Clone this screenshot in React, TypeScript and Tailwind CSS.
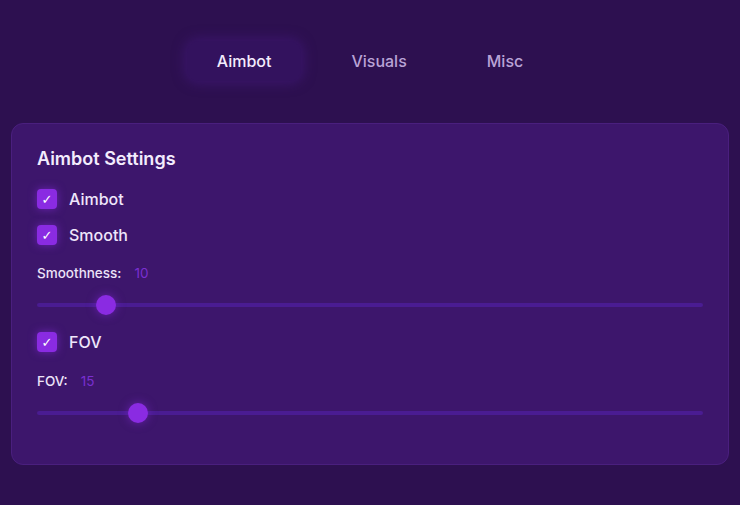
import React, { useState } from 'react';

const font = { fontFamily: 'Inter, "Noto Sans", sans-serif' };

type Tab = 'Aimbot' | 'Visuals' | 'Misc';

const Check: React.FC<{ label: string; checked: boolean; onToggle: () => void }> = ({ label, checked, onToggle }) => (
  <button onClick={onToggle} className="flex items-center gap-3 h-6 text-left">
    <span
      className={`w-5 h-5 rounded-[4px] flex items-center justify-center text-white text-[13px] leading-none font-['DejaVu_Sans',sans-serif] ${
        checked ? 'bg-[#8a2be2] shadow-[0_0_8px_rgba(138,43,226,0.6)]' : 'bg-[#2a0f4c] border border-[#5b2a9a]'
      }`}
    >
      {checked ? '✓' : ''}
    </span>
    <span className="text-[16px] text-[#efe6fb] font-medium">{label}</span>
  </button>
);

const Slider: React.FC<{ label: string; value: number; onChange: (v: number) => void }> = ({ label, value, onChange }) => {
  const pct = (value - 1) / 99;
  return (
    <div className="flex flex-col gap-3">
      <div className="flex items-center gap-[13px] h-5 text-[13.5px]">
        <span className="text-[#ece3f8] font-medium">{label}</span>
        <span className="text-[#7a2fd0]">{value}</span>
      </div>
      <div className="relative h-5 flex items-center">
        <div className="w-full h-[4px] rounded-full bg-[#4a1c92]" />
        <div
          className="absolute top-0 w-5 h-5 rounded-full bg-[#8a2be2] shadow-[0_0_10px_rgba(138,43,226,0.55)]"
          style={{ left: `calc((100% - 20px) * ${pct})` }}
        />
        <input
          type="range"
          min={1}
          max={100}
          value={value}
          onChange={(e) => onChange(Number(e.target.value))}
          className="absolute inset-0 w-full opacity-0 cursor-pointer"
        />
      </div>
    </div>
  );
};

export default function App() {
  const [tab, setTab] = useState<Tab>('Aimbot');
  const [aimbot, setAimbot] = useState(true);
  const [smooth, setSmooth] = useState(true);
  const [fov, setFov] = useState(true);
  const [smoothness, setSmoothness] = useState(10);
  const [fovSize, setFovSize] = useState(15);

  const tabs: Tab[] = ['Aimbot', 'Visuals', 'Misc'];

  return (
    <div className="min-h-screen w-full bg-[#2d1050] px-[11px] pt-[41px] pb-10" style={font}>
      {/* Tab strip */}
      <div className="flex justify-center gap-5">
        {tabs.map((t) => (
          <button
            key={t}
            onClick={() => setTab(t)}
            className={`h-10 px-[30px] rounded-xl text-[16px] font-medium ${
              tab === t
                ? 'bg-[#33125e] text-[#f3ecfd] shadow-[0_0_12px_3px_rgba(70,25,130,0.5)]'
                : 'text-[#b9a3d6]'
            }`}
          >
            {t}
          </button>
        ))}
      </div>

      {/* Settings card */}
      <div className="mt-[42px] h-[342px] rounded-xl bg-[#3d166c] border border-[#4a1f7e] px-[25px] pt-[21px]">
        <h2 className="text-[18px] leading-7 font-semibold text-[#f3ecfd]">Aimbot Settings</h2>
        <div className="mt-[14px] flex flex-col gap-3">
          <Check label="Aimbot" checked={aimbot} onToggle={() => setAimbot(!aimbot)} />
          <Check label="Smooth" checked={smooth} onToggle={() => setSmooth(!smooth)} />
        </div>
        <div className="mt-4">
          <Slider label="Smoothness:" value={smoothness} onChange={setSmoothness} />
        </div>
        <div className="mt-[15px]">
          <Check label="FOV" checked={fov} onToggle={() => setFov(!fov)} />
        </div>
        <div className="mt-[17px]">
          <Slider label="FOV:" value={fovSize} onChange={setFovSize} />
        </div>
      </div>
    </div>
  );
}
